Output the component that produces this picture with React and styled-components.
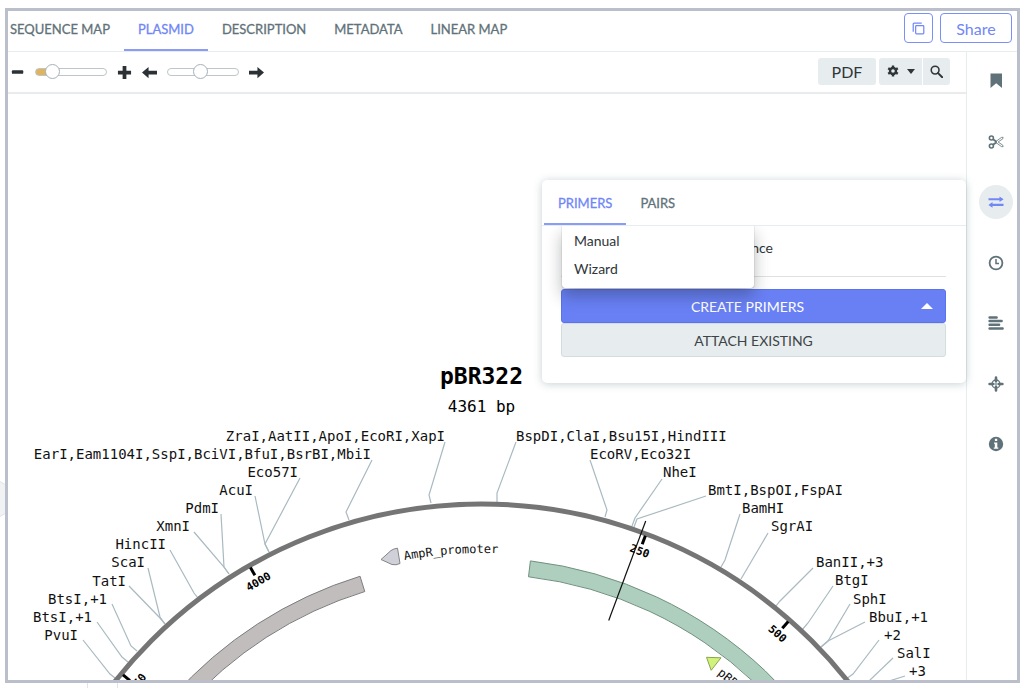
import React from "react";
import styled, { createGlobalStyle } from "styled-components";

const GlobalStyle = createGlobalStyle`
  * {
    box-sizing: border-box;
  }

  body {
    margin: 0;
    background: #fff;
    font-family: Lato, "Open Sans", sans-serif;
    color: #2f3639;
  }

  button {
    font-family: inherit;
    margin: 0;
    padding: 0;
    border: none;
    background: none;
    cursor: pointer;
  }
`;

const Page = styled.div`
  position: relative;
  display: flex;
  height: 100vh;
  padding: 8px 4px 5px 5px;
`;

const Backdrop = styled.svg`
  position: absolute;
  left: 0;
  bottom: 0;
  width: 120px;
  height: 210px;
`;

const Frame = styled.main`
  position: relative;
  flex: 1;
  display: flex;
  flex-direction: column;
  min-width: 0;
  background: #fff;
  border: 3px solid #bbbecb;
`;

const Header = styled.header`
  display: flex;
  justify-content: space-between;
  height: 41px;
  padding: 0 5px 0 2px;
  border-bottom: 1px solid #e6edef;
`;

const Tabs = styled.nav`
  display: flex;
`;

const Tab = styled.button`
  height: ${(props) => (props.$tall ? 45 : 40)}px;
  padding: 0 14px;
  padding-bottom: ${(props) => (props.$tall ? 0 : 5)}px;
  font-size: 13px;
  color: ${(props) => (props.$active ? "#6f86f6" : "#5f7279")};
  -webkit-text-stroke: 0.3px;
  box-shadow: ${(props) => (props.$active ? "inset 0 -2px #8a9cf8" : "none")};
  white-space: nowrap;

  header > nav > &:first-child {
    padding-left: 0;
  }
`;

const Actions = styled.div`
  display: flex;
  gap: 7px;
  padding-top: 2px;
`;

const OutlineButton = styled.button`
  display: flex;
  align-items: center;
  justify-content: center;
  width: ${(props) => (props.$wide ? 72 : 29)}px;
  height: 30px;
  border: 1px solid #7a8ff7;
  border-radius: 4px;
  color: #7187f5;
  font-size: 16px;
`;

const Body = styled.div`
  flex: 1;
  display: flex;
  min-height: 0;
`;

const Main = styled.section`
  position: relative;
  flex: 1;
  display: flex;
  flex-direction: column;
  min-width: 0;
`;

const Toolbar = styled.div`
  display: flex;
  align-items: center;
  justify-content: space-between;
  height: 42px;
  padding: 0 16px 2px 3px;
  border-bottom: 2px solid #eaebec;
`;

const Controls = styled.div`
  display: flex;
  align-items: center;
  gap: 10px;
  padding-top: 2px;
`;

const IconButton = styled.button`
  display: flex;
  color: #2b3134;
`;

const Range = styled.input`
  appearance: none;
  width: 72px;
  height: 16px;
  margin: 0;
  background: none;

  &::-webkit-slider-runnable-track {
    height: 8px;
    border: 1px solid #bfc5c8;
    border-radius: 4px;
    background: ${(props) =>
      props.$filled ? "linear-gradient(to right, #dfb45c 24%, #fff 24%)" : "#fff"};
  }

  &::-webkit-slider-thumb {
    appearance: none;
    width: 15px;
    height: 15px;
    margin-top: -5px;
    border: 1px solid #a5b2b8;
    border-radius: 50%;
    background: #fff;
  }
`;

const ToolGroup = styled.div`
  display: flex;
  gap: 1px;
`;

const ToolButton = styled.button`
  display: flex;
  align-items: center;
  justify-content: center;
  gap: 8px;
  width: ${(props) => props.$width}px;
  height: 27px;
  margin-right: ${(props) => (props.$single ? 2 : 0)}px;
  border-radius: ${(props) => props.$radius};
  background: #e7ecee;
  color: #2f3639;
  font-size: 16px;
`;

const Sidebar = styled.aside`
  width: 51px;
  padding: 12px 0 0 8px;
  border-left: 1px solid #e6edef;
`;

const SideList = styled.div`
  display: flex;
  flex-direction: column;
  align-items: center;
  justify-content: space-between;
  height: 397px;
`;

const SideButton = styled.button`
  display: flex;
  align-items: center;
  justify-content: center;
  width: 34px;
  height: 34px;
  border-radius: 50%;
  background: ${(props) => (props.$active ? "#e7ecee" : "none")};
  color: ${(props) => (props.$active ? "#7187f5" : "#5f7279")};
`;

const MapArea = styled.div`
  flex: 1;
  min-height: 0;
`;

const MapSvg = styled.svg`
  display: block;
  width: 100%;
  height: 100%;
  font-family: "DejaVu Sans Mono", monospace;
`;

const Name = styled.text`
  font-size: 23px;
  font-weight: bold;
  text-anchor: middle;
`;

const Length = styled.text`
  font-size: 16px;
  text-anchor: middle;
`;

const SiteLabel = styled.text`
  font-size: 14px;
  fill: #111;
  text-anchor: ${(props) => (props.$left ? "end" : "start")};
`;

const TickLabel = styled.text`
  font-size: 11px;
  font-weight: bold;
  text-anchor: middle;
`;

const FeatureLabel = styled.text`
  font-size: 12px;
  fill: #111;
`;

const Panel = styled.div`
  position: absolute;
  top: 128px;
  right: 0;
  width: 424px;
  padding-bottom: 26px;
  border-radius: 5px;
  background: #fff;
  box-shadow: 0 1px 8px rgba(70, 100, 110, 0.3);
`;

const PanelTabs = styled.nav`
  display: flex;
  padding-left: 2px;
  border-bottom: 1px solid #e6edef;
`;

const PanelBody = styled.div`
  position: relative;
  display: flex;
  flex-direction: column;
  padding: 0 20px 0 19px;
`;

const Hint = styled.p`
  height: 51px;
  margin: 0 0 12px;
  padding-right: 173px;
  border-bottom: 1px solid #dfe2e4;
  font-size: 14px;
  line-height: 44px;
  text-align: right;
`;

const PanelButton = styled.button`
  position: relative;
  height: 34px;
  border: 1px solid ${(props) => (props.$primary ? "#5872f0" : "#d5dcdf")};
  border-radius: 3px;
  background: ${(props) => (props.$primary ? "#6980f5" : "#e7ecee")};
  color: ${(props) => (props.$primary ? "#fff" : "#3c4447")};
  padding-right: ${(props) => (props.$primary ? 12 : 0)}px;
  font-size: 14px;
`;

const Caret = styled.svg`
  position: absolute;
  top: 13px;
  right: 12px;
`;

const Menu = styled.div`
  position: absolute;
  top: 0;
  left: 20px;
  z-index: 1;
  display: flex;
  flex-direction: column;
  width: 192px;
  padding-bottom: 6px;
  border-radius: 0 0 3px 3px;
  background: #fff;
  box-shadow: 0 0 1px rgba(0, 0, 0, 0.6), 0 8px 16px rgba(16, 22, 26, 0.3);
  clip-path: inset(0 -24px -28px -24px);
`;

const MenuItem = styled.button`
  height: 28px;
  padding: 0 12px;
  font-size: 14px;
  text-align: left;
  color: #2f3639;
`;

const Icon = ({ size = 16, children }) => (
  <svg width={size} height={size} viewBox="0 0 16 16" fill="currentColor" aria-hidden="true">
    {children}
  </svg>
);

const icons = {
  minus: <rect x="1" y="6" width="13" height="4" rx="1" />,
  plus: <path d="M6 1h4v5h5v4h-5v5H6v-5H1V6h5z" />,
  left: <path d="M0 8l7-6v4h9v4H7v4z" />,
  right: <path d="M16 8L9 2v4H0v4h9v4z" />,
  copy: (
    <g fill="none" stroke="currentColor" strokeWidth="1.5">
      <rect x="4.5" y="4.5" width="10" height="10" rx="1" />
      <path d="M1.5 12V2.5a1 1 0 0 1 1-1H12" />
    </g>
  ),
  gear: (
    <g>
      <circle cx="8" cy="8" r="4" fill="none" stroke="currentColor" strokeWidth="3.2" />
      <path
        d="M8 0.6v3M8 12.4v3M1.6 4.3l2.6 1.5M11.8 10.2l2.6 1.5M1.6 11.7l2.6-1.5M11.8 5.8l2.6-1.5"
        stroke="currentColor"
        strokeWidth="3.2"
      />
    </g>
  ),
  search: (
    <g fill="none" stroke="currentColor">
      <circle cx="6.3" cy="6.3" r="4.8" strokeWidth="1.9" />
      <path d="M10 10l5 5" strokeWidth="2.4" strokeLinecap="round" />
    </g>
  ),
  bookmark: <path d="M2.5 0.5h11.5v14.5L8.2 10.2 2.5 15z" />,
  scissors: (
    <g fill="none" stroke="currentColor">
      <circle cx="3.4" cy="4" r="2" strokeWidth="1.6" />
      <circle cx="3.4" cy="12" r="2" strokeWidth="1.6" />
      <path d="M5 5.2l3.5 2.6M5 10.8l3.5-2.6" strokeWidth="1.8" />
      <path
        d="M8.3 7.2l5.2-3.8 1.6-.1-.3 1.5-4.7 3.2 4.7 3.2.3 1.5-1.6-.1-5.2-3.8z"
        strokeWidth="0.8"
      />
    </g>
  ),
  swap: (
    <g>
      <path d="M0.5 4.2h11V2.4L15.6 5.2l-4.1 2.9V6.3H0.5z" />
      <path d="M15.5 9.8h-11V8L0.4 10.9l4.1 2.8v-1.8h11z" />
    </g>
  ),
  clock: (
    <g fill="none" stroke="currentColor">
      <circle cx="8" cy="8" r="6.4" strokeWidth="1.8" />
      <path d="M8 4v4.4h3" strokeWidth="1.5" />
    </g>
  ),
  lines: (
    <path
      d="M1.6 2.4h7M1.6 6.1h12M1.6 9.8h9.5M1.6 13.5h13"
      stroke="currentColor"
      strokeWidth="2.5"
      strokeLinecap="round"
    />
  ),
  locate: (
    <g fill="none" stroke="currentColor">
      <circle cx="8" cy="8" r="4" strokeWidth="1.3" />
      <circle cx="8" cy="8" r="1.1" strokeWidth="0.8" />
      <path
        d="M8 1.6v3.6M8 10.8v3.6M1.6 8h3.6M10.8 8h3.6"
        strokeWidth="2.6"
        strokeLinecap="round"
      />
    </g>
  ),
  info: (
    <g>
      <circle cx="8" cy="8" r="7.2" />
      <path d="M6.9 2.8h2.3V5H6.9zM6 6.4h3.3v5h1v1.4H5.8v-1.4h1V7.8H6z" fill="#fff" />
    </g>
  ),
};

const sideItems = [
  ["Bookmarks", "bookmark"],
  ["Cut sites", "scissors"],
  ["Primers", "swap"],
  ["History", "clock"],
  ["Alignments", "lines"],
  ["Target", "locate"],
  ["Info", "info"],
];

// plasmid circle
const CX = 481.5;
const CY = 971;
const R = 467;
const TOTAL = 4361;

const point = (r, deg) => {
  const a = (deg * Math.PI) / 180;
  return [CX + r * Math.sin(a), CY - r * Math.cos(a)];
};

const band = (inner, outer, from, to) => {
  const p = [point(outer, from), point(outer, to), point(inner, to), point(inner, from)];
  return `M${p[0]} A${outer} ${outer} 0 0 1 ${p[1]} L${p[2]} A${inner} ${inner} 0 0 0 ${p[3]} Z`;
};

const arc = (r, from, to) => `M${point(r, from)} A${r} ${r} 0 0 1 ${point(r, to)}`;

const leftSites = [
  ["ZraI,AatII,ApoI,EcoRI,XapI", 445, 441, "445,442 429,495 431,503"],
  ["EarI,Eam1104I,SspI,BciVI,BfuI,BsrBI,MbiI", 371, 459, "372,460 346,512 349,520"],
  ["Eco57I", 298, 477, "300,478 265,544 269,552"],
  ["AcuI", 253, 495, "255,496 265,544 269,552"],
  ["PdmI", 219, 513, "221,514 224,567 229,574"],
  ["XmnI", 190, 531, "194,532 224,567 229,574"],
  ["HincII", 166, 549, "170,550 194,593 198,598"],
  ["ScaI", 145, 567, "148,568 160,617 165,624"],
  ["TatI", 126, 586, "129,586 160,618 165,624"],
  ["BtsI,+1", 107, 604, "112,604 131,646 137,651"],
  ["BtsI,+1", 92, 622, "97,622 122,657 128,662"],
  ["PvuI", 78, 640, "83,640 110,674 115,678"],
];

const rightSites = [
  ["BspDI,ClaI,Bsu15I,HindIII", 516, 441, "516,442 497,493 497,502"],
  ["EcoRV,Eco32I", 590, 459, "590,460 607,510 605,517"],
  ["NheI", 663, 477, "662,479 635,518 632,526"],
  ["BmtI,BspOI,FspAI", 708, 495, "706,496 637,519 634,527"],
  ["BamHI", 742, 513, "740,514 725,560 721,567"],
  ["SgrAI", 771, 531, "768,533 741,579"],
  ["BanII,+3", 816, 567, "813,568 780,601 776,606"],
  ["BtgI", 835, 585, "833,586 808,623 802,630"],
  ["SphI", 853, 604, "850,604 828,641 821,647"],
  ["BbuI,+1", 869, 622, "865,622 828,641 821,647"],
  ["+2", 884, 640, "879,640 853,674 846,679"],
  ["SalI", 897, 658, "893,658 869,681"],
  ["+3", 909, 676, "905,676 886,682"],
];

const ticks = [3750, 4000, 250, 500];

const Site = ({ site, left }) => {
  const [label, x, y, line] = site;
  return (
    <g>
      <polyline points={line} fill="none" stroke="#a9bac1" strokeWidth="1.2" />
      <SiteLabel $left={left} x={x} y={y}>
        {label}
      </SiteLabel>
    </g>
  );
};

const Tick = ({ bp }) => {
  const deg = (bp > TOTAL / 2 ? bp - TOTAL : bp) * (360 / TOTAL);
  return (
    <g transform={`translate(${CX} ${CY}) rotate(${deg})`}>
      <line y1={-465} y2={-456} stroke="#000" strokeWidth="3" />
      <TickLabel y={-445}>{bp}</TickLabel>
    </g>
  );
};

const PlasmidMap = () => (
  <MapSvg viewBox="8 94 958 586" preserveAspectRatio="xMidYMin slice" role="img">
    <defs>
      <path id="promoter" d={arc(418, -10.6, 40)} />
      <path id="origin" d={arc(379, 38.4, 80)} />
    </defs>
    <Name x={CX} y={384}>
      pBR322
    </Name>
    <Length x={CX} y={412}>
      4361 bp
    </Length>
    {leftSites.map((site, i) => (
      <Site key={i} site={site} left />
    ))}
    {rightSites.map((site, i) => (
      <Site key={i} site={site} />
    ))}
    <path d={band(397, 413, -80, -17.1)} fill="#c2bdbd" stroke="#7d7d7d" />
    <path d={band(397, 413, 6.8, 80)} fill="#aecfbe" stroke="#71907f" />
    <circle cx={CX} cy={CY} r={R} fill="none" stroke="#757575" strokeWidth="5" />
    {ticks.map((bp) => (
      <Tick key={bp} bp={bp} />
    ))}
    <path d="M381 559.5L391 550.5Q394 548.5 397.5 548.2L400 563.5Q396 565.5 392 564.5Z" fill="#d0d1d8" stroke="#858589" />
    <FeatureLabel>
      <textPath href="#promoter">AmpR_promoter</textPath>
    </FeatureLabel>
    <path d="M706.5 657.3L721 657.8 711.2 670.3Z" fill="#d0f37e" stroke="#8ba44b" />
    <FeatureLabel>
      <textPath href="#origin">pBR322</textPath>
    </FeatureLabel>
    <line x1="645.7" y1="521" x2="608.7" y2="620.5" stroke="#111" strokeWidth="1.2" />
  </MapSvg>
);

const PrimersPanel = () => (
  <Panel>
    <PanelTabs>
      <Tab $tall $active>
        PRIMERS
      </Tab>
      <Tab $tall>PAIRS</Tab>
    </PanelTabs>
    <PanelBody>
      <Menu>
        <MenuItem>Manual</MenuItem>
        <MenuItem>Wizard</MenuItem>
      </Menu>
      <Hint>nce</Hint>
      <PanelButton $primary>
        CREATE PRIMERS
        <Caret width="12" height="6" viewBox="0 0 12 6">
          <path d="M6 0l6 6H0z" fill="#fff" />
        </Caret>
      </PanelButton>
      <PanelButton>ATTACH EXISTING</PanelButton>
    </PanelBody>
  </Panel>
);

const App = () => {
  return (
    <Page>
      <GlobalStyle />
      <Backdrop viewBox="0 0 120 210">
        <path d="M-1 3L6 7v28l-7 4z" fill="#f0f2f4" stroke="#e0e4e9" />
        <path d="M87.5 200v10M117.5 200v10" stroke="#e3e5ec" />
      </Backdrop>
      <Frame>
        <Header>
          <Tabs>
            <Tab>SEQUENCE MAP</Tab>
            <Tab $active>PLASMID</Tab>
            <Tab>DESCRIPTION</Tab>
            <Tab>METADATA</Tab>
            <Tab>LINEAR MAP</Tab>
          </Tabs>
          <Actions>
            <OutlineButton aria-label="Copy">
              <Icon size={13}>{icons.copy}</Icon>
            </OutlineButton>
            <OutlineButton $wide>Share</OutlineButton>
          </Actions>
        </Header>
        <Body>
          <Main>
            <Toolbar>
              <Controls>
                <IconButton aria-label="Zoom out">
                  <Icon size={14}>{icons.minus}</Icon>
                </IconButton>
                <Range type="range" aria-label="Zoom" defaultValue={17} $filled />
                <IconButton aria-label="Zoom in">
                  <Icon size={15}>{icons.plus}</Icon>
                </IconButton>
                <IconButton aria-label="Rotate left">
                  <Icon size={15}>{icons.left}</Icon>
                </IconButton>
                <Range type="range" aria-label="Rotation" defaultValue={46} />
                <IconButton aria-label="Rotate right">
                  <Icon size={15}>{icons.right}</Icon>
                </IconButton>
              </Controls>
              <ToolGroup>
                <ToolButton $width={58} $radius="3px" $single>
                  PDF
                </ToolButton>
                <ToolButton $width={43} $radius="3px 0 0 3px" aria-label="Settings">
                  <Icon size={12}>{icons.gear}</Icon>
                  <svg width="8" height="5" viewBox="0 0 8 5">
                    <path d="M0 0h8L4 5z" fill="#2f3639" />
                  </svg>
                </ToolButton>
                <ToolButton $width={27} $radius="0 3px 3px 0" aria-label="Search">
                  <Icon size={13}>{icons.search}</Icon>
                </ToolButton>
              </ToolGroup>
            </Toolbar>
            <MapArea>
              <PlasmidMap />
            </MapArea>
            <PrimersPanel />
          </Main>
          <Sidebar>
            <SideList>
              {sideItems.map(([label, icon]) => (
                <SideButton key={label} aria-label={label} $active={icon === "swap"}>
                  <Icon>{icons[icon]}</Icon>
                </SideButton>
              ))}
            </SideList>
          </Sidebar>
        </Body>
      </Frame>
    </Page>
  );
};

export default App;
